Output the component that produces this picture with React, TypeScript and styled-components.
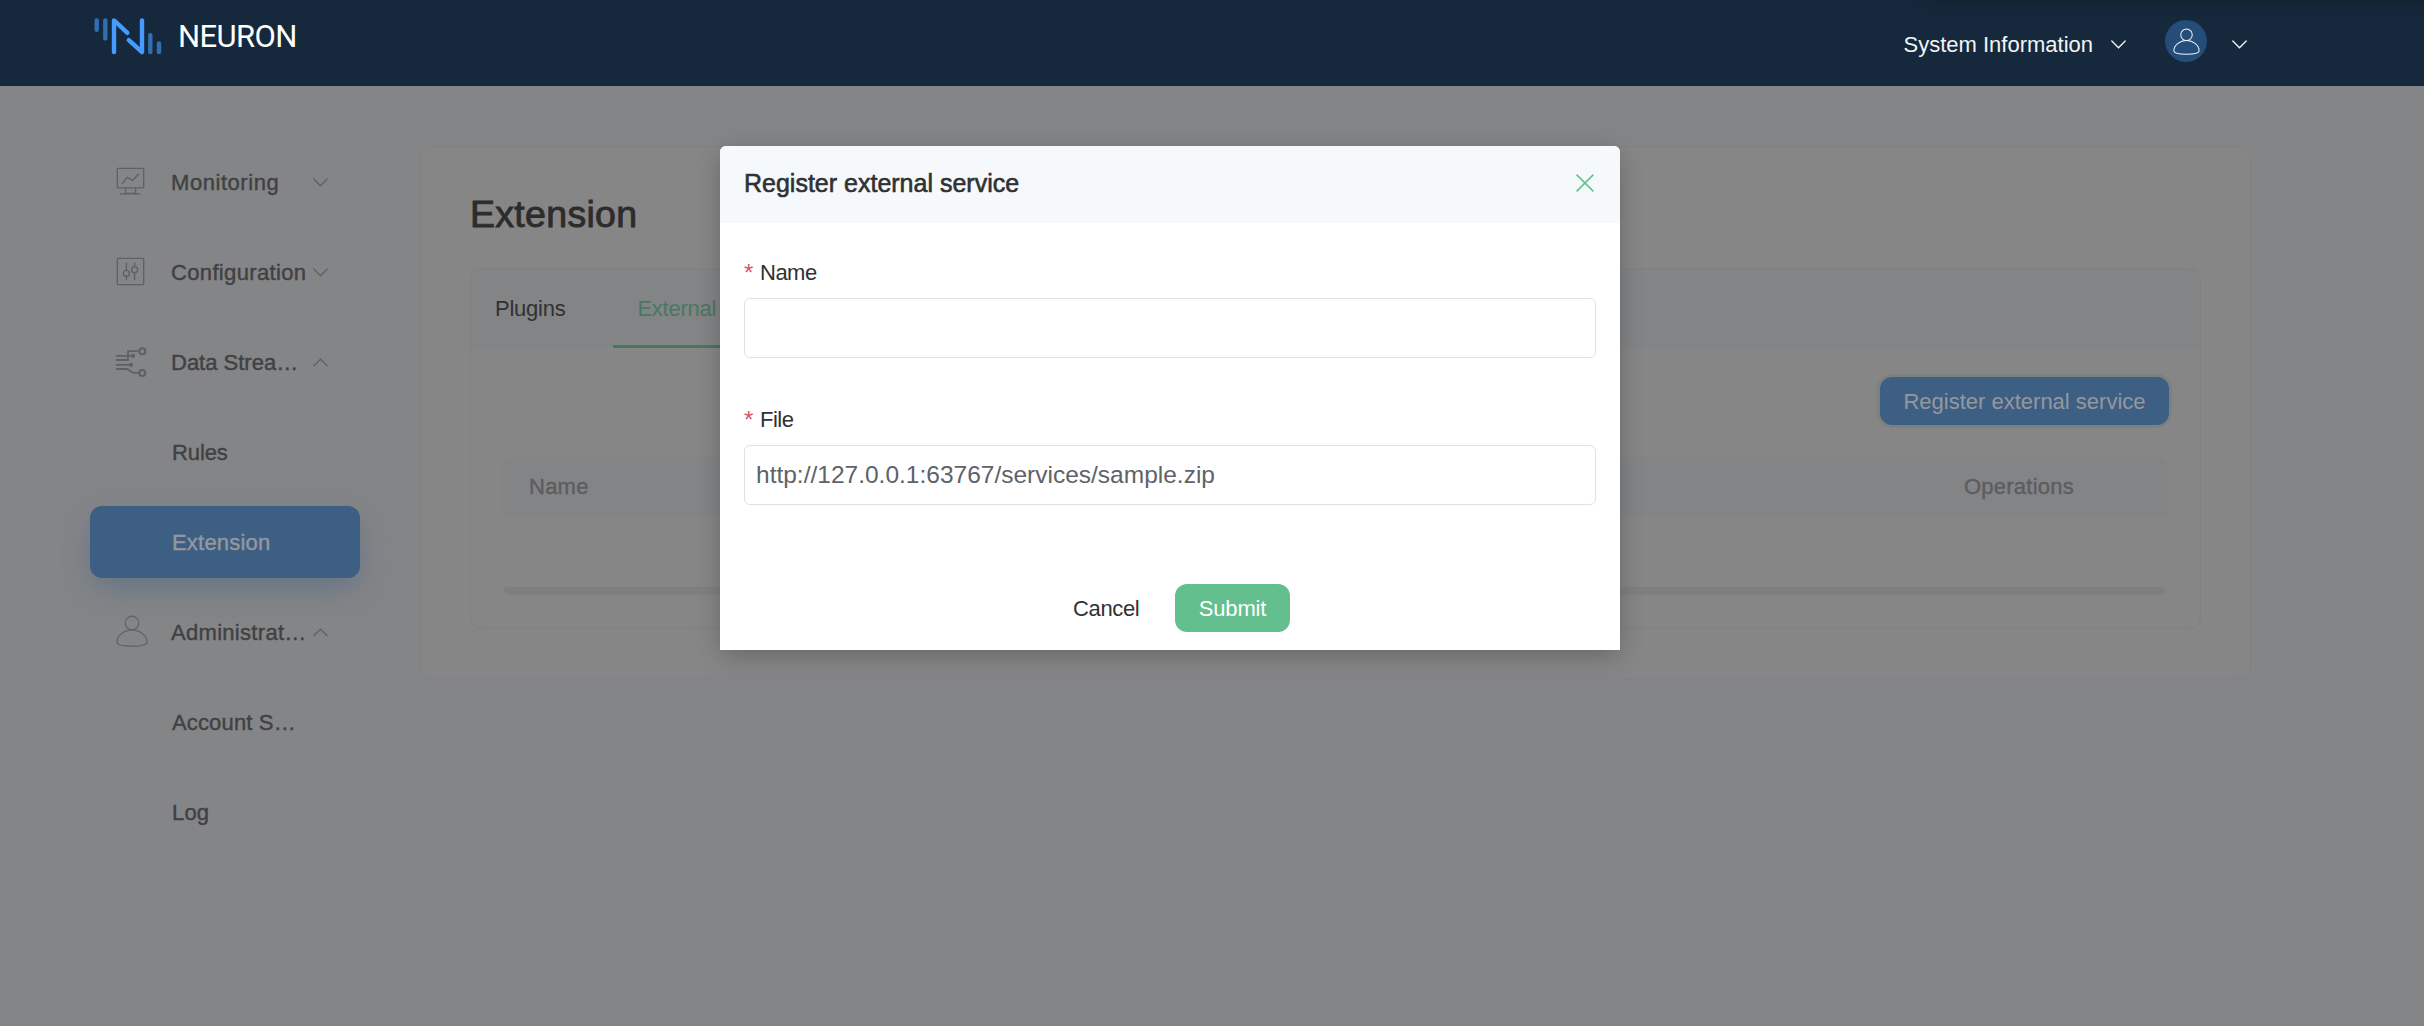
import React from 'react';
import styled, { createGlobalStyle, css } from 'styled-components';

const GlobalStyle = createGlobalStyle`
  * { box-sizing: border-box; }
  body {
    margin: 0;
    background: #848587;
    font-family: "Liberation Sans", Arial, sans-serif;
    font-size: 22px;
  }
`;

const Page = styled.div`
  position: relative;
  height: 1026px;
  overflow: hidden;
  display: flex;
  flex-direction: column;
`;

const Header = styled.header`
  height: 86px;
  flex: none;
  background: #16283c;
  display: flex;
  justify-content: space-between;
  padding: 0 177px 0 93px;
`;

const TopShade = styled.div`
  position: absolute;
  top: -30px;
  left: 1925px;
  right: -20px;
  height: 30px;
  box-shadow: 0 0 16px 2px rgba(20, 28, 34, 0.45);
`;

const Brand = styled.div`
  display: flex;
  height: 72px;
  align-items: center;
`;

const BrandName = styled.span`
  margin: 2px 0 0 11px;
  font-family: Roboto, sans-serif;
  font-size: 31px;
  line-height: 36px;
  letter-spacing: -0.6px;
  color: #fff;
`;

const HeaderActions = styled.div`
  display: flex;
  height: 88px;
  align-items: center;
  color: #f2f4f6;
`;

const SystemLabel = styled.span`
  padding-top: 2px;
  line-height: 24px;
  margin-right: 18px;
`;

const Avatar = styled.div`
  width: 42px;
  height: 42px;
  margin: 0 25px 6px 39px;
  border-radius: 50%;
  background: #244d7a;
  display: flex;
  align-items: center;
  justify-content: center;
`;

const Body = styled.div`
  flex: 1;
  display: flex;
  align-items: flex-start;
  padding: 60px 173px 0 90px;
`;

const Sidebar = styled.nav`
  width: 270px;
  margin-right: 60px;
  display: flex;
  flex-direction: column;
  gap: 18px;
`;

const medium = css`
  -webkit-text-stroke: 0.4px currentColor;
`;

const MenuItem = styled.div<{ $active?: boolean; $nested?: boolean }>`
  height: 72px;
  display: flex;
  align-items: center;
  padding: 0 32px 0 ${(p) => (p.$nested ? 82 : 26)}px;
  border-radius: 12px;
  color: ${(p) => (p.$active ? '#94989d' : '#404143')};
  ${(p) =>
    p.$active &&
    css`
      background: #3e5f84;
      box-shadow: 0 12px 30px -4px rgba(62, 95, 132, 0.5);
    `}
`;

const MenuIcon = styled.span`
  width: 32px;
  height: 34px;
  margin-right: 23px;
  color: #5f6063;
  svg { display: block; }
`;

const MenuText = styled.span<{ $spacing: number }>`
  flex: 1;
  padding-top: 1px;
  white-space: nowrap;
  line-height: 24px;
  letter-spacing: ${(p) => p.$spacing}px;
  ${medium}
`;

const MenuArrow = styled.span`
  height: 14px;
  color: #606163;
  display: flex;
  align-items: center;
`;

const Card = styled.main`
  flex: 1;
  height: 533px;
  border: 1px solid #808184;
  border-radius: 12px;
  background: #868686;
  padding: 47px 49px 0 49px;
`;

const Title = styled.h1`
  margin: 0 0 33px;
  font-size: 37.5px;
  font-weight: 400;
  line-height: 41px;
  letter-spacing: 0.3px;
  color: #2c2c2c;
  -webkit-text-stroke: 0.9px currentColor;
`;

const TabPanel = styled.section`
  height: 361px;
  border: 1px solid #7f8082;
  border-radius: 12px;
  overflow: hidden;
`;

const TabBar = styled.div`
  height: 79px;
  background: #838486;
  display: flex;
  gap: 24px;
`;

const Tab = styled.div<{ $active?: boolean }>`
  padding: 28px 24px 0;
  line-height: 24px;
  letter-spacing: -0.25px;
  white-space: nowrap;
  color: ${(p) => (p.$active ? '#487960' : '#303133')};
  border-bottom: 3px solid ${(p) => (p.$active ? '#487760' : 'transparent')};
`;

const TabContent = styled.div`
  padding: 29px 31px 0 30px;
  display: flex;
  flex-direction: column;
`;

const RegisterButton = styled.button`
  align-self: flex-end;
  width: 289px;
  height: 48px;
  border: 0;
  border-radius: 12px;
  padding: 1px 0 0;
  background: #3e5f84;
  box-shadow: 0 0 0 3px #7b827e;
  color: #94989d;
  font: inherit;
`;

const Table = styled.div`
  margin-top: 32px;
  height: 140px;
  border: 1px solid #858587;
  border-radius: 12px;
  overflow: hidden;
`;

const TableHead = styled.div`
  height: 58px;
  background: #838486;
  display: flex;
  align-items: center;
  justify-content: space-between;
  padding: 0 94px 1px 27px;
  color: #5c5d5f;
  letter-spacing: 0.25px;
  ${medium}
`;

const ScrollTrack = styled.div`
  margin: 71px 3px 0 1px;
  height: 8px;
  border-radius: 4px;
  background: #7f7f7f;
`;

const Modal = styled.div`
  position: absolute;
  left: 720px;
  top: 146px;
  width: 900px;
  height: 504px;
  border-radius: 6px 6px 0 0;
  background: #fff;
  box-shadow: 0 6px 26px -2px rgba(0, 0, 0, 0.26);
  color: #303133;
`;

const ModalHeader = styled.div`
  height: 77px;
  border-radius: 6px 6px 0 0;
  background: #f5f9fc;
  display: flex;
  justify-content: space-between;
  padding: 23px 26px 0 24px;
`;

const ModalTitle = styled.h2`
  margin: 0;
  font-size: 25px;
  font-weight: 400;
  line-height: 28px;
  -webkit-text-stroke: 0.6px currentColor;
`;

const CloseIcon = styled.svg`
  margin-top: 5px;
`;

const Field = styled.div<{ $last?: boolean }>`
  padding: ${(p) => (p.$last ? 50 : 38)}px 24px 0;
`;

const Label = styled.div`
  height: 37px;
  display: flex;
  line-height: 24px;
  letter-spacing: -0.5px;
`;

const Required = styled.span`
  width: 16px;
  font-size: 24px;
  color: #d8546c;
`;

const Input = styled.div`
  height: 60px;
  border: 1px solid #dfe1e3;
  border-radius: 6px;
  padding: 0 11px;
  font-size: 24.5px;
  line-height: 58px;
  color: #606269;
`;

const ModalFooter = styled.div`
  margin-top: 79px;
  display: flex;
  padding-left: 353px;
  align-items: center;
`;

const CancelButton = styled.button`
  width: 102px;
  height: 48px;
  padding: 1px 0 0;
  border: 0;
  background: transparent;
  color: #303133;
  font: inherit;
  letter-spacing: -0.35px;
  text-align: left;
`;

const SubmitButton = styled.button`
  width: 115px;
  height: 48px;
  padding: 1px 0 0;
  border: 0;
  border-radius: 12px;
  background: #64bf8e;
  color: #fff;
  font: inherit;
  letter-spacing: -0.2px;
`;

const Logo = () => (
  <svg width="74" height="42" viewBox="93 15 74 42" fill="none" strokeWidth="4.4" strokeLinecap="round" strokeLinejoin="round">
    <path d="M96.7 20.4V29.8M105.3 20.4V38.4M150.3 35.2V52M159 43.4V52" stroke="#326fb2" />
    <path d="M114 52V20.4L127.4 32.8M128.8 40.2L142 52V20.4" stroke="#459bff" />
  </svg>
);

const Chevron = ({ up }: { up?: boolean }) => (
  <svg width="15" height="9" viewBox="0 0 15 9" fill="none" stroke="currentColor" strokeWidth="1.3" strokeLinecap="round">
    <path d={up ? 'M.8 7.8 7.5 1.2 14.2 7.8' : 'M.8 1 7.5 7.8 14.2 1'} />
  </svg>
);

const Person = ({ size }: { size: number }) => (
  <svg width={size} height={size} viewBox="0 0 32 32" fill="none" stroke="currentColor" strokeWidth="1.2">
    <circle cx="16" cy="8" r="6.8" />
    <path d="M16 14.8C8 14.8 1 21 1 27c0 3 6 4.2 15 4.2S31 30 31 27C31 21 24 14.8 16 14.8Z" />
  </svg>
);

const MonitorIcon = () => (
  <svg width="32" height="34" viewBox="116 165 32 34" fill="none" stroke="currentColor" strokeWidth="1.3">
    <rect x="117.3" y="168.3" width="26.4" height="19.6" rx="1" />
    <path d="M125.6 188v5.5h10V188M120 193.9h20M122 183.8l5.2-6.4 5.6 3 6-6.6" />
  </svg>
);

const SlidersIcon = () => (
  <svg width="32" height="34" viewBox="116 255 32 34" fill="none" stroke="currentColor" strokeWidth="1.3">
    <rect x="117.3" y="258.3" width="26.4" height="26.4" rx="1" />
    <path d="M126.4 262.5v8M126.4 276.5v3.8M134.6 262.5v4.3M134.6 272.7v7.6" />
    <circle cx="126.4" cy="273.4" r="3" />
    <circle cx="134.6" cy="269.7" r="3" />
  </svg>
);

const StreamIcon = () => (
  <svg width="32" height="34" viewBox="116 345 32 34" fill="none" stroke="currentColor" strokeWidth="1.8">
    <path d="M116 355.8h16M116 360h12V351.2h10.8M116 364.8h14M116 369h10.5c3 0 4.5 3.9 8 3.9h4.3" />
    <circle cx="142.3" cy="351.2" r="3" strokeWidth="2" />
    <circle cx="142.3" cy="372.9" r="3" strokeWidth="2" />
    <circle cx="133" cy="355.8" r="2.1" fill="currentColor" stroke="none" />
    <circle cx="131" cy="364.8" r="2.1" fill="currentColor" stroke="none" />
  </svg>
);

type Item = {
  text: string;
  icon?: React.ReactNode;
  up?: boolean;
  active?: boolean;
  spacing: number;
};

const items: Item[] = [
  { text: 'Monitoring', icon: <MonitorIcon />, spacing: 0.55 },
  { text: 'Configuration', icon: <SlidersIcon />, spacing: 0.35 },
  { text: 'Data Strea…', icon: <StreamIcon />, up: true, spacing: 0 },
  { text: 'Rules', spacing: -0.1 },
  { text: 'Extension', active: true, spacing: 0.2 },
  { text: 'Administrat…', icon: <Person size={32} />, up: true, spacing: 0.3 },
  { text: 'Account S…', spacing: 0.15 },
  { text: 'Log', spacing: 0.2 },
];

export default function App() {
  return (
    <>
      <GlobalStyle />
      <Page>
        <Header>
          <Brand>
            <Logo />
            <BrandName>NEURON</BrandName>
          </Brand>
          <HeaderActions>
            <SystemLabel>System Information</SystemLabel>
            <Chevron />
            <Avatar>
              <Person size={27} />
            </Avatar>
            <Chevron />
          </HeaderActions>
        </Header>
        <TopShade />
        <Body>
          <Sidebar>
            {items.map((item) => (
              <MenuItem key={item.text} $active={item.active} $nested={!item.icon}>
                {item.icon && <MenuIcon>{item.icon}</MenuIcon>}
                <MenuText $spacing={item.spacing}>{item.text}</MenuText>
                {item.icon && (
                  <MenuArrow>
                    <Chevron up={item.up} />
                  </MenuArrow>
                )}
              </MenuItem>
            ))}
          </Sidebar>
          <Card>
            <Title>Extension</Title>
            <TabPanel>
              <TabBar>
                <Tab>Plugins</Tab>
                <Tab $active>External services</Tab>
              </TabBar>
              <TabContent>
                <RegisterButton>Register external service</RegisterButton>
                <Table>
                  <TableHead>
                    <span>Name</span>
                    <span>Operations</span>
                  </TableHead>
                  <ScrollTrack />
                </Table>
              </TabContent>
            </TabPanel>
          </Card>
        </Body>
        <Modal>
          <ModalHeader>
            <ModalTitle>Register external service</ModalTitle>
            <CloseIcon width="18" height="18" viewBox="0 0 18 18" stroke="#64bf8e" strokeWidth="1.5">
              <path d="M.6.6 17.4 17.4M17.4.6.6 17.4" />
            </CloseIcon>
          </ModalHeader>
          <Field>
            <Label>
              <Required>*</Required>Name
            </Label>
            <Input />
          </Field>
          <Field $last>
            <Label>
              <Required>*</Required>File
            </Label>
            <Input>http://127.0.0.1:63767/services/sample.zip</Input>
          </Field>
          <ModalFooter>
            <CancelButton>Cancel</CancelButton>
            <SubmitButton>Submit</SubmitButton>
          </ModalFooter>
        </Modal>
      </Page>
    </>
  );
}
